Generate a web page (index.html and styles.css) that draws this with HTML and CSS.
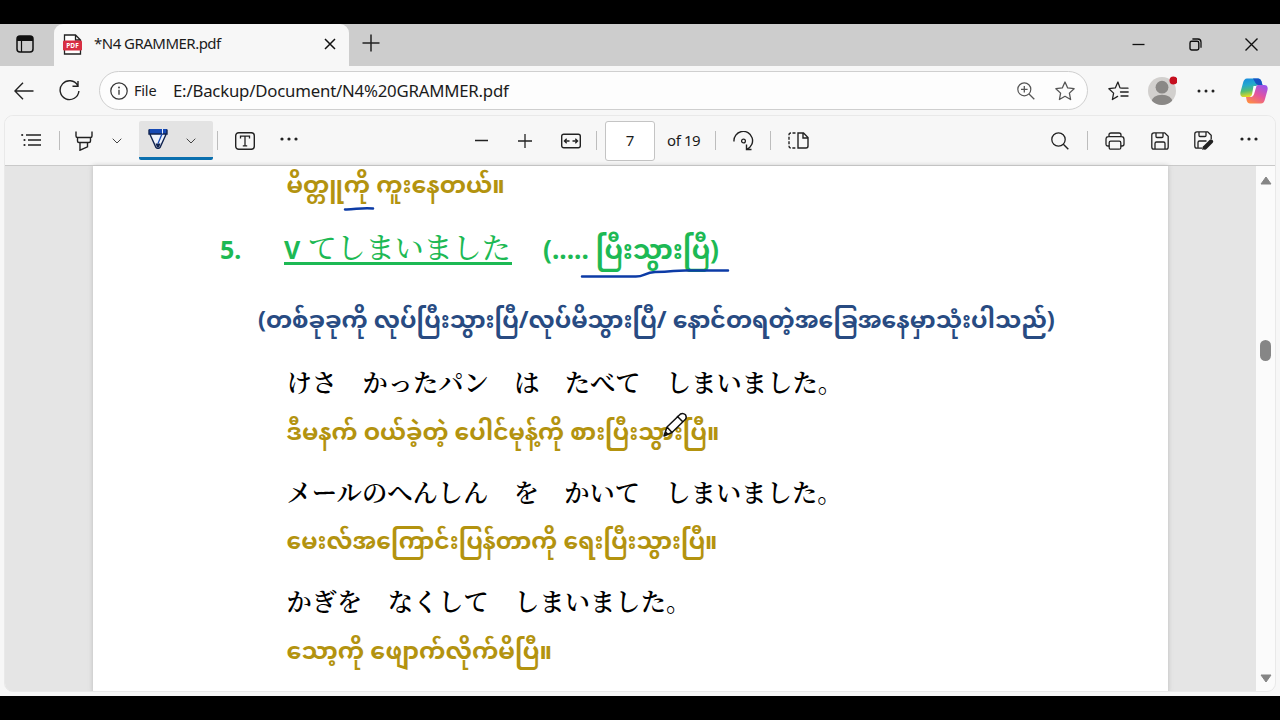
FILE: index.html
```html
<!DOCTYPE html>
<html lang="en">
<head>
<meta charset="utf-8">
<title>N4 GRAMMER.pdf</title>
<link rel="stylesheet" href="styles.css">
</head>
<body>
<div class="browser">
  <header class="tabstrip">
    <span class="cell tabs-menu"><svg width="18" height="18" viewBox="0 0 18 18"><rect x="1" y="1" width="16" height="16" rx="3" fill="none" stroke="#111" stroke-width="1.5"/><path d="M1 6V4a3 3 0 0 1 3-3h10a3 3 0 0 1 3 3v2z" fill="#111"/><path d="M5.5 6v11" stroke="#111" stroke-width="1.2"/></svg></span>
    <div class="tab">
      <svg class="pdf-icon" width="19" height="21" viewBox="0 0 19 21"><path d="M1.500 8V1h11l5 5v2M12.500 1v5h5M1.500 16v4h16v-4" fill="#fff" stroke="#222" stroke-width="1.300"/><rect y="6.500" width="19" height="10" rx="1.300" fill="#d82f43"/><text x="9.500" y="14" text-anchor="middle" class="pdf-mark">PDF</text></svg>
      <span class="tab-title">*N4 GRAMMER.pdf</span>
      <svg class="tab-close" width="12" height="12" viewBox="0 0 12 12"><path d="M1 1l10 10M11 1L1 11" stroke="#111" stroke-width="1.500"/></svg>
    </div>
    <span class="cell new-tab"><svg width="18" height="18" viewBox="0 0 18 18"><path d="M9 .5v17M.5 9h17" stroke="#222" stroke-width="1.500"/></svg></span>
    <div class="window-buttons">
      <span class="cell"><svg width="13" height="13" viewBox="0 0 13 13"><path d="M.5 6.500h12" stroke="#111" stroke-width="1.300"/></svg></span>
      <span class="cell"><svg width="13" height="13" viewBox="0 0 13 13"><rect x="1" y="3.200" width="8.800" height="8.800" rx="1.700" fill="none" stroke="#111" stroke-width="1.400"/><path d="M3.400 1h5.500A3.200 3.200 0 0 1 12 4.200v5.500" fill="none" stroke="#111" stroke-width="1.300"/></svg></span>
      <span class="cell"><svg width="13" height="13" viewBox="0 0 13 13"><path d="M.5.5l12 12M12.500.5l-12 12" stroke="#111" stroke-width="1.400"/></svg></span>
    </div>
  </header>

  <nav class="address-row">
    <span class="cell back"><svg width="20" height="18" viewBox="0 0 20 18"><path d="M19.500 9H1M9 .8L.9 9 9 17.200" fill="none" stroke="#222" stroke-width="1.400"/></svg></span>
    <span class="cell reload"><svg width="21" height="21" viewBox="0 0 21 21"><path d="M18.700 5.500A9.400 9.400 0 1 0 19.900 11M19 1v5.200h-5.500" fill="none" stroke="#222" stroke-width="1.400"/></svg></span>
    <div class="address">
      <svg width="18" height="18" viewBox="0 0 18 18"><circle cx="9" cy="9" r="8.200" fill="none" stroke="#333" stroke-width="1.200"/><path d="M9 7.700v5" stroke="#333" stroke-width="1.300"/><circle cx="9" cy="5.500" r=".9" fill="#333"/></svg>
      <span class="scheme">File</span>
      <span class="url">E:/Backup/Document/N4%20GRAMMER.pdf</span>
      <svg class="zoom-icon" width="18" height="18" viewBox="0 0 18 18"><circle cx="7.300" cy="7.300" r="6.500" fill="none" stroke="#555" stroke-width="1.200"/><path d="M12 12l5.300 5.300M7.300 4v6.600M4 7.300h6.600" stroke="#555" stroke-width="1.300"/></svg>
      <svg width="20" height="20" viewBox="0 0 20 20"><path d="M10 1l2.700 5.900 6.400.8-4.700 4.400 1.200 6.400L10 15.300l-5.600 3.200 1.200-6.400L.9 7.700l6.400-.8z" fill="none" stroke="#555" stroke-width="1.300" stroke-linejoin="round"/></svg>
    </div>
    <div class="profile-tools">
      <span class="cell"><svg width="21" height="20" viewBox="0 0 21 20"><path d="M14 7.200l-2-.300L9.900 1 7.300 6.900.9 7.700l4.700 4.400-1.200 6.400 5.200-3.100M14 7.200h6M12.500 11h7.700M13 15h7" fill="none" stroke="#222" stroke-width="1.300" stroke-linejoin="round" stroke-linecap="round"/></svg></span>
      <span class="cell"><svg width="30" height="30" viewBox="0 0 30 30"><defs><clipPath id="face"><circle cx="15" cy="15" r="14"/></clipPath></defs><circle cx="15" cy="15" r="14" fill="#d2d0ce"/><g clip-path="url(#face)" fill="#8a8886"><circle cx="15" cy="11.200" r="6.400"/><ellipse cx="15" cy="26" rx="10.500" ry="7.300"/></g><circle cx="26.500" cy="4.500" r="4" fill="#c50f1f"/></svg></span>
      <span class="cell"><svg width="18" height="4" viewBox="0 0 18 4" fill="#222"><circle cx="2" cy="2" r="1.500"/><circle cx="9" cy="2" r="1.500"/><circle cx="16" cy="2" r="1.500"/></svg></span>
      <span class="cell copilot"><svg width="28" height="26" viewBox="0 0 28 26"><defs><linearGradient id="cool" x2=".2" y2="1"><stop stop-color="#1689e0"/><stop offset=".4" stop-color="#25a9cc"/><stop offset=".7" stop-color="#54bd72"/><stop offset="1" stop-color="#e5da23"/></linearGradient><linearGradient id="warm" x1=".8" x2=".2" y2="1"><stop stop-color="#9b54ec"/><stop offset=".5" stop-color="#e4549f"/><stop offset="1" stop-color="#ff8d42"/></linearGradient></defs><path d="M7 .5h11q2.500 0 3.500 3l1 3.500h-4q-2.500 0-3.500 3l-2 6.500q-1 2.500-3.500 2.500H4q-4.500 0-3.500-5L3 5q1-4.500 4-4.500z" fill="url(#cool)"/><path d="M21 25.500H10q-2.500 0-3.300-3L6 19h3.500q2.500 0 3.500-3l2-6q1-3 3.500-3H24q4.500 0 3.500 5L25 21q-1 4.500-4 4.500z" fill="url(#warm)"/><path d="M13 .5h5q2.500 0 3.500 3l1 3.500h-4q-2 0-3-2z" fill="#1752c4"/><path d="M13.500 8h3l-2.400 8q-1 3-3.500 3h-.8q1.800-.5 2.300-3z" fill="#fff"/></svg></span>
    </div>
  </nav>

  <main class="viewer">
    <div class="pdf-toolbar">
      <span class="cell list"><svg width="20" height="14" viewBox="0 0 20 14"><path d="M5 2h15M7 7h13M7 12h13" stroke="#222" stroke-width="1.300"/><g fill="#222"><circle cx="1.200" cy="2" r="1.100"/><circle cx="3.500" cy="7" r="1.100"/><circle cx="3.500" cy="12" r="1.100"/></g></svg></span>
      <i class="sep"></i>
      <span class="cell w48"><svg width="18" height="20" viewBox="0 0 18 20"><path d="M1 .5v4.500q0 1.500 1.500 1.500h13Q17 6.500 17 5V.5M2.500 6.500v3.500q0 1.500 1.500 1.500h10q1.500 0 1.500-1.500V6.500M5 11.500v7.700l7.500-3.400v-4.300" fill="none" stroke="#222" stroke-width="1.400"/></svg></span>
      <span class="cell w18"><svg width="10" height="6" viewBox="0 0 10 6"><path d="M.7.7L5 5 9.300.7" fill="none" stroke="#444"/></svg></span>
      <div class="pen-tool">
        <svg width="20" height="20" viewBox="0 0 20 20"><path d="M1 0v5h18V0z" fill="#1549b4"/><path d="M1.800 5L8 18.500q2 2 4 0L18.200 5z" fill="#eef3fc"/><path d="M1 .5V5h18V.5M1.800 5L8 18.500q2 2 4 0L18.200 5" fill="none" stroke="#10234f" stroke-width="1.400"/><path d="M7.500 14.500L9 18.500h2l1.500-4z" fill="#10234f"/><path d="M10 14.500L14 5" stroke="#1549b4" stroke-width="1.300"/><path d="M14.500 4.500V0" stroke="#e8eefc"/></svg>
        <svg class="pen-arrow" width="10" height="6" viewBox="0 0 10 6"><path d="M.7.7L5 5 9.300.7" fill="none" stroke="#444"/></svg>
      </div>
      <i class="sep after-pen"></i>
      <span class="cell w54"><svg width="20" height="18" viewBox="0 0 20 18"><rect x=".7" y=".7" width="18.600" height="16.600" rx="3" fill="none" stroke="#222" stroke-width="1.400"/><path d="M5.500 6.500V4.200h9v2.300M10 4.200v9.600M7.800 13.800h4.400" fill="none" stroke="#222" stroke-width="1.300"/></svg></span>
      <span class="cell w34 more"><svg width="18" height="4" viewBox="0 0 18 4" fill="#222"><circle cx="2" cy="2" r="1.600"/><circle cx="9" cy="2" r="1.600"/><circle cx="16" cy="2" r="1.600"/></svg></span>
      <div class="paging">
        <span class="cell w44"><svg width="13" height="13" viewBox="0 0 13 13"><path d="M0 6.500h13" stroke="#222" stroke-width="1.400"/></svg></span>
        <span class="cell w44"><svg width="14" height="14" viewBox="0 0 14 14"><path d="M0 7h14M7 0v14" stroke="#222" stroke-width="1.300"/></svg></span>
        <span class="cell fit"><svg width="20" height="16" viewBox="0 0 20 16"><rect x=".7" y="1.200" width="18.600" height="13.600" rx="2" fill="none" stroke="#222" stroke-width="1.400"/><path d="M8.500 8H3.500M5.700 5.700L3.400 8l2.300 2.300M11.500 8h5M14.300 5.700L16.600 8l-2.300 2.300" fill="none" stroke="#222" stroke-width="1.300"/></svg></span>
        <i class="sep"></i>
        <span class="page-number">7</span>
        <span class="page-total">of 19</span>
        <i class="sep"></i>
        <span class="cell w54"><svg width="21" height="20" viewBox="0 0 21 20"><path d="M1 10.500A9.300 9.300 0 1 1 14 18.200M13.500 13.500v5h5" fill="none" stroke="#222" stroke-width="1.400"/><circle cx="10.500" cy="10" r="1.900" fill="none" stroke="#222" stroke-width="1.300"/></svg></span>
        <i class="sep"></i>
        <span class="cell w54"><svg width="21" height="17" viewBox="0 0 21 17"><path d="M10 1h5.500L20 5.500V14q0 2-2 2h-8zM15 1v5h5" fill="none" stroke="#222" stroke-width="1.400"/><path d="M7.500 1H3Q1 1 1 3v11q0 2 2 2h4.500" fill="none" stroke="#222" stroke-width="1.400" stroke-dasharray="3 1.500"/></svg></span>
      </div>
      <div class="file-tools">
        <span class="cell w54"><svg width="18" height="18" viewBox="0 0 18 18"><circle cx="7.500" cy="7.500" r="6.700" fill="none" stroke="#222" stroke-width="1.300"/><path d="M12.300 12.300l5 5" stroke="#222" stroke-width="1.400"/></svg></span>
        <i class="sep"></i>
        <span class="cell w54"><svg width="20" height="18" viewBox="0 0 20 18"><path d="M4 5V3q0-2 2-2h8q2 0 2 2v2M4 14H3q-2 0-2-2V7.500Q1 4.700 3.500 4.700h13Q19 4.700 19 7.500V12q0 2-2 2h-1" fill="none" stroke="#222" stroke-width="1.300"/><rect x="4.200" y="9.200" width="11.600" height="8" rx="1.500" fill="none" stroke="#222" stroke-width="1.300"/></svg></span>
        <span class="cell w34"><svg width="18" height="18" viewBox="0 0 18 18"><path d="M3 .8h10.700l3.500 3.500V15q0 2.200-2 2.200H3q-2.200 0-2.200-2.200V3Q.8.800 3 .8zM5 1v3.500q0 1 1 1h5q1 0 1-1V1M4 17v-5.500q0-1.500 1.500-1.500h7q1.500 0 1.500 1.500V17" fill="none" stroke="#222" stroke-width="1.300"/></svg></span>
        <span class="cell w54"><svg width="20" height="19" viewBox="0 0 20 19"><path d="M8 17.200H3q-2.200 0-2.200-2.200V3Q.8.800 3 .8h10.700l3.500 3.500V8M5 1v3.500q0 1 1 1h5q1 0 1-1V1M4 17v-5.500q0-1.500 1.500-1.500h7" fill="none" stroke="#222" stroke-width="1.300"/><path d="M11 16.500l6-6" stroke="#222" stroke-width="4.200" stroke-linecap="round"/><path d="M9 15l3 3-4 .8z" fill="#222"/></svg></span>
        <span class="cell w34 more"><svg width="18" height="4" viewBox="0 0 18 4" fill="#222"><circle cx="2" cy="2" r="1.600"/><circle cx="9" cy="2" r="1.600"/><circle cx="16" cy="2" r="1.600"/></svg></span>
      </div>
    </div>

    <div class="document">
      <article class="sheet">
        <p class="line my first">မိတ္တူကို ကူးနေတယ်။</p>
        <h1 class="line heading"><span class="num">5.</span><span class="pattern">V <span class="kana">てしまいました</span></span><span class="meaning">(..... ပြီးသွားပြီ)</span></h1>
        <p class="line note">(တစ်ခုခုကို လုပ်ပြီးသွားပြီ/လုပ်မိသွားပြီ/ နောင်တရတဲ့အခြေအနေမှာသုံးပါသည်)</p>
        <p class="line jp" lang="ja">けさ　かったパン　は　たべて　しまいました。</p>
        <p class="line my m1">ဒီမနက် ဝယ်ခဲ့တဲ့ ပေါင်မုန့်ကို စားပြီးသွားပြီ။</p>
        <p class="line jp" lang="ja">メールのへんしん　を　かいて　しまいました。</p>
        <p class="line my m2">မေးလ်အကြောင်းပြန်တာကို ရေးပြီးသွားပြီ။</p>
        <p class="line jp" lang="ja">かぎを　なくして　しまいました。</p>
        <p class="line my m3">သော့ကို ဖျောက်လိုက်မိပြီ။</p>
        <svg class="ink" width="1075" height="526" viewBox="93 166 1075 526"><path d="M345 209.500C354 210 362 207 373 208.500M582 276.500h52c10 1 10-4 21-4.500 20 0 18-2 34-1.500h39" fill="none" stroke="#0c3ba6" stroke-width="2.500" stroke-linecap="round"/><path d="M664 436l3-9 13.500-13q2.500-1.500 5 .8 1.500 2.500 0 4.500L672 432.500zM677 416l6 6M667 427l5 5.500" fill="#fff" stroke="#111" stroke-width="1.500" stroke-linejoin="round"/><path d="M664 436l1.500-5 3.500 3.300z" fill="#111"/></svg>
      </article>
      <div class="scrollbar">
        <svg width="12" height="9" viewBox="0 0 12 9"><path d="M6 1l5 7H1z" fill="#858585" stroke="#858585" stroke-linejoin="round"/></svg>
        <i class="thumb"></i>
        <svg class="down" width="12" height="9" viewBox="0 0 12 9"><path d="M6 8L1 1h10z" fill="#858585" stroke="#858585" stroke-linejoin="round"/></svg>
      </div>
    </div>
  </main>
</div>
</body>
</html>
```
FILE: styles.css
```css
* { box-sizing: border-box; }
body { margin: 0; background: #000; color: #1b1b1b; font-family: "Segoe UI", "Noto Sans", "Open Sans", sans-serif; }
svg { display: block; flex: none; }
.browser { width: 1280px; height: 720px; padding: 24px 0; display: flex; flex-direction: column; overflow: hidden; }
.cell { display: flex; align-items: center; justify-content: center; flex: none; }
.w18 { width: 18px; }
.w34 { width: 34px; }
.w44 { width: 44px; }
.w48 { width: 48px; }
.w54 { width: 54px; }

.tabstrip { height: 42px; flex: none; display: flex; background: #cdcdcd; }
.tabs-menu { width: 49px; height: 40px; margin-right: 5px; }
.tab { width: 295px; height: 42px; display: flex; align-items: center; padding: 0 13px 2px 9px; background: #f7f7f7; border-radius: 9px 9px 0 0; }
.tab-title { flex: 1; margin-left: 12px; font-size: 15px; letter-spacing: -.52px; white-space: nowrap; padding-bottom: 2px; }
.pdf-mark { font: bold 6.5px "Open Sans", sans-serif; fill: #fff; }
.new-tab { width: 44px; height: 38px; }
.window-buttons { margin-left: auto; display: flex; }
.window-buttons .cell { width: 56.5px; height: 41px; }

.address-row { height: 49px; flex: none; display: flex; align-items: center; background: #f7f7f7; }
.back { width: 48px; }
.reload { width: 42px; }
.address { width: 989px; height: 39px; margin-left: 9px; padding: 0 12px 0 10px; display: flex; align-items: center; background: #fdfdfd; border: 1px solid #cfcfcf; border-radius: 20px; }
.scheme { width: 39px; margin-left: 6px; padding-bottom: 2px; font-size: 14.5px; letter-spacing: -.2px; }
.url { flex: 1; padding-bottom: 1px; font-size: 16.8px; letter-spacing: -.21px; white-space: nowrap; }
.zoom-icon { margin-right: 20px; }
.profile-tools { display: flex; margin-left: 8px; }
.profile-tools .cell { width: 44px; }
.profile-tools .copilot { width: 52px; }

.viewer { width: 1272px; height: 577px; margin: 0 4px; display: flex; flex-direction: column; background: #f7f7f7; border: 1px solid #e9e9e9; border-radius: 9px; overflow: hidden; box-shadow: 0 0 0 30px #f7f7f7; clip-path: inset(0 -4px -4px -4px); flex: none; }
.pdf-toolbar { height: 50px; flex: none; display: flex; align-items: center; background: #f7f7f7; border-bottom: 1px solid #c9c9c9; }
.sep { width: 1px; height: 19px; background: #bdbdbd; flex: none; }
.list { width: 54px; padding-right: 2px; padding-bottom: 2px; }
.more { padding-bottom: 3px; }
.pen-tool { width: 74px; height: 39px; margin-left: 13px; padding: 0 17px 0 9px; display: flex; align-items: center; justify-content: space-between; background: #e3e3e3; border-bottom: 3px solid #0a6fae; border-radius: 2px; }
.pen-arrow { margin-top: 4px; }
.after-pen { margin-left: 4px; }
.paging { display: flex; align-items: center; margin-left: 153px; }
.fit { width: 48px; margin-right: 1px; }
.page-number { width: 50px; height: 40px; margin-left: 8px; padding-bottom: 2px; display: flex; align-items: center; justify-content: center; background: #fff; border: 1px solid #c4c4c4; border-radius: 3px; font-size: 15px; }
.page-total { width: 60px; padding-left: 12px; padding-bottom: 2px; font-size: 15px; letter-spacing: -.4px; white-space: nowrap; }
.file-tools { display: flex; align-items: center; margin-left: auto; margin-right: 9px; }
.file-tools .w34 { width: 35px; }

.document { flex: 1; min-height: 0; display: flex; justify-content: space-between; background: #e5e5e5; }
.sheet { position: relative; width: 1075px; height: 527px; margin-left: 88px; background: #fff; box-shadow: 0 0 5px #bbb; overflow: hidden; }
.scrollbar { width: 19px; display: flex; flex-direction: column; align-items: center; padding: 10px 0 8px; background: #fbfbfb; }
.thumb { width: 11px; height: 21px; margin-top: 155px; background: #868686; border-radius: 6px; }
.down { margin-top: auto; }
.ink { position: absolute; left: 0; top: 0; }

.line { margin: 0; padding-left: 193.500px; white-space: nowrap; font-family: "Noto Sans", "Noto Sans Myanmar", "Myanmar Text", Padauk, sans-serif; font-weight: 700; }
.my { height: 61px; line-height: 51px; color: #b3930f; }
.first { height: 52px; line-height: 36px; font-size: 23.700px; }
.m1 { font-size: 23.450px; }
.m2 { font-size: 23.400px; }
.m3 { font-size: 23.800px; }
.heading { display: flex; height: 66px; padding-left: 127px; line-height: 62px; font-size: 25px; color: #1db954; }
.num { width: 64px; }
.pattern { width: 228px; height: 47px; line-height: 58px; border-bottom: 3px solid #1db954; }
.kana { margin-left: 1px; font-family: "Noto Serif CJK JP", "Noto Sans CJK JP", sans-serif; font-size: 29px; font-weight: 500; }
.meaning { margin-left: 31px; font-size: 26.300px; }
.note { height: 73px; padding-left: 165px; line-height: 71px; font-size: 23.570px; color: #284b82; }
.jp { height: 48.500px; line-height: 48px; font-family: "Noto Serif CJK JP", "Noto Sans CJK JP", sans-serif; font-size: 25.300px; font-weight: 600; color: #000; }
```
